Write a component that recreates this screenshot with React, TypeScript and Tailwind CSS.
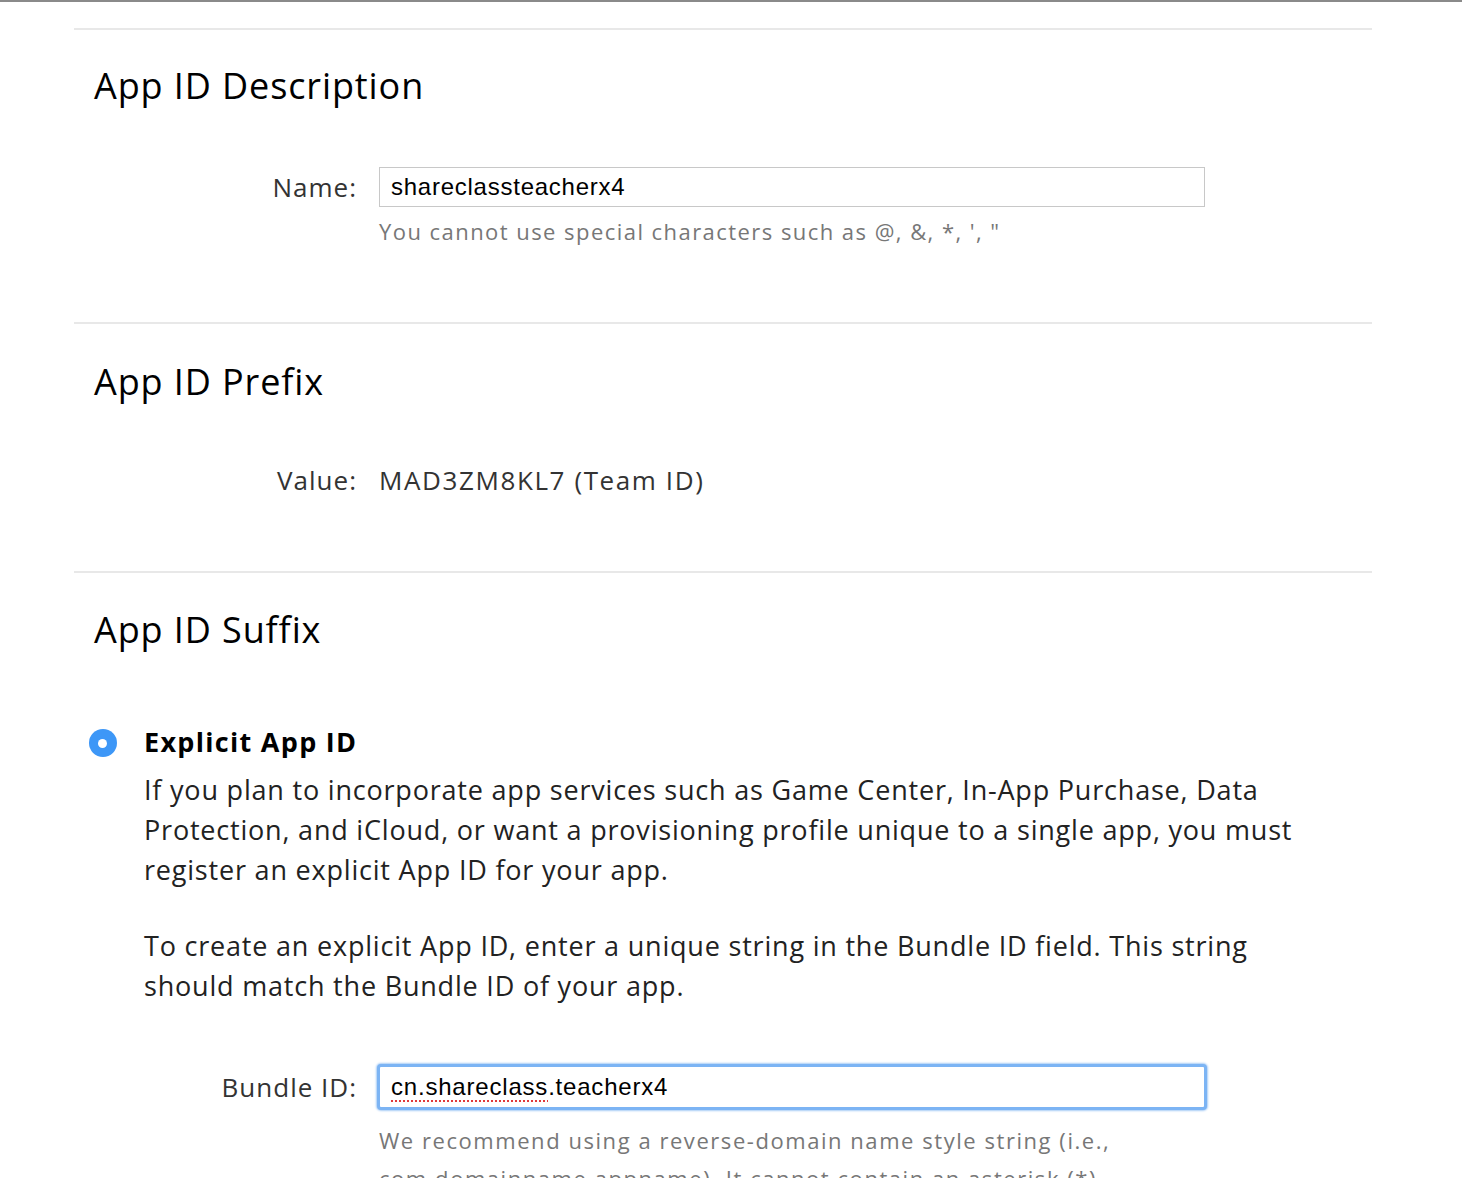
import React from 'react';

const font = { fontFamily: '"Open Sans", "Noto Sans", sans-serif' };
const inputFont = { fontFamily: '"Liberation Sans", Arial, sans-serif' };

function Divider() {
  return <div className="h-[2px] bg-[#e8e8e8]" />;
}

function Heading({ children }: { children: React.ReactNode }) {
  return <h2 className="pl-5 text-[36px] leading-[44px] tracking-[0.9px] text-black">{children}</h2>;
}

export default function App() {
  return (
    <div className="min-h-screen bg-white border-t-2 border-[#8a8a8a] text-[#333]" style={font}>
      <div className="ml-[74px] w-[1298px] pt-[26px]">
        <Divider />

        {/* App ID Description */}
        <section className="pt-[34px] pb-[72px]">
          <Heading>App ID Description</Heading>
          <div className="mt-[59px] flex items-start">
            <label className="w-[305px] text-right pr-[22px] text-[26px] leading-[40px] tracking-[1px] text-[#333]">Name:</label>
            <div>
              <input
                readOnly
                value="shareclassteacherx4"
                className="w-[826px] h-[40px] border border-[#c8c8c8] px-[11px] text-[24px] tracking-[0.75px] text-black outline-none"
                style={inputFont}
              />
              <p className="mt-[5px] text-[22px] leading-[38px] tracking-[1.45px] text-[#777]">
                You cannot use special characters such as @, &amp;, *, ', "
              </p>
            </div>
          </div>
        </section>

        <Divider />

        {/* App ID Prefix */}
        <section className="pt-[36px] pb-[71px]">
          <Heading>App ID Prefix</Heading>
          <div className="mt-[56px] flex items-center">
            <span className="w-[305px] text-right pr-[22px] text-[26px] leading-[40px] tracking-[1px] text-[#333]">Value:</span>
            <span className="text-[26px] leading-[40px] tracking-[1.6px] text-[#333]">MAD3ZM8KL7 (Team ID)</span>
          </div>
        </section>

        <Divider />

        {/* App ID Suffix */}
        <section className="pt-[35px]">
          <Heading>App ID Suffix</Heading>

          <div className="mt-[70px] flex items-start">
            <div className="w-[70px] flex justify-center pt-[7px]">
              <span className="flex w-[28px] h-[28px] rounded-full bg-[#3d97f7] items-center justify-center ml-[-13px]">
                <span className="w-[9px] h-[9px] rounded-full bg-white" />
              </span>
            </div>
            <div className="flex-1">
              <h3 className="text-[27px] leading-[40px] font-bold tracking-[1.3px] text-black">Explicit App ID</h3>
              <p className="mt-[8px] text-[27px] leading-[40px] tracking-[0.8px] text-[#222] w-[1200px]">
                If you plan to incorporate app services such as Game Center, In-App Purchase, Data
                <br />
                Protection, and iCloud, or want a provisioning profile unique to a single app, you must
                <br />
                register an explicit App ID for your app.
              </p>
              <p className="mt-[36px] text-[27px] leading-[40px] tracking-[0.8px] text-[#222] w-[1200px]">
                To create an explicit App ID, enter a unique string in the Bundle ID field. This string
                <br />
                should match the Bundle ID of your app.
              </p>
            </div>
          </div>

          <div className="mt-[58px] flex items-start">
            <label className="w-[305px] text-right pr-[22px] text-[26px] leading-[46px] tracking-[1px] text-[#333]">Bundle ID:</label>
            <div className="ml-[-2px]">
              <div className="w-[830px] h-[46px] rounded-[4px] border-[3px] border-[#7cb4f4] bg-white flex items-center px-[11px] shadow-[0_0_2px_1px_#a9cdf6]">
                <span className="text-[24px] tracking-[0.8px] text-black" style={inputFont}>
                  <span className="underline decoration-dotted decoration-[#e0393a] decoration-2 underline-offset-[5px]">cn.shareclass</span>
                  .teacherx4
                </span>
              </div>
              <p className="mt-[11px] ml-[2px] text-[22px] leading-[38px] tracking-[1.55px] text-[#777] w-[900px]">
                We recommend using a reverse-domain name style string (i.e.,
                <br />
                com.domainname.appname). It cannot contain an asterisk (*).
              </p>
            </div>
          </div>
        </section>
      </div>
    </div>
  );
}
